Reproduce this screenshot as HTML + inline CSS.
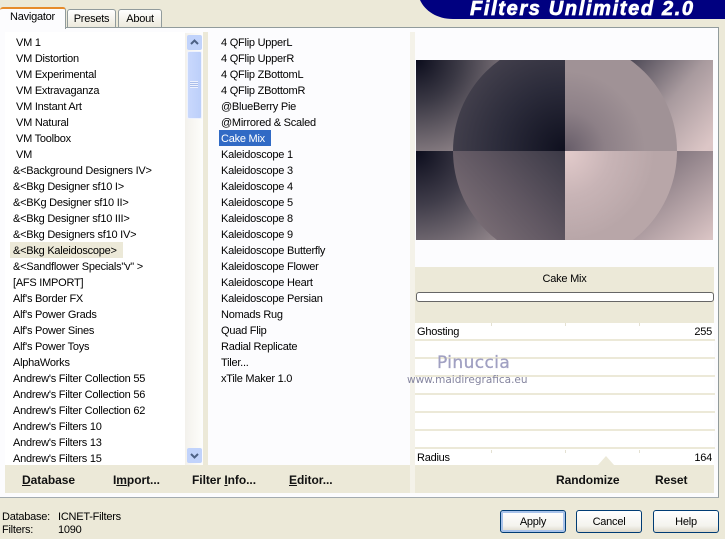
<!DOCTYPE html>
<html><head><meta charset="utf-8">
<style>
html,body{margin:0;padding:0}
body{width:725px;height:539px;overflow:hidden;background:#ece9d8;position:relative;font-family:"Liberation Sans",sans-serif;font-size:11px;letter-spacing:-.24px;color:#000}
.a{position:absolute}
.l{position:absolute;white-space:pre;line-height:18px;height:16px}
.b{position:absolute;font-weight:bold;font-size:12px;letter-spacing:-.05px;white-space:pre;line-height:16px;color:#111}
.btn{position:absolute;top:510px;width:66px;height:23px;box-sizing:border-box;border:1px solid #003c74;border-radius:3px;background:linear-gradient(#fff,#f4f3ee 70%,#dcd8ca);text-align:center;line-height:22px}
.sep{position:absolute;left:415px;width:300px;height:2px;background:#ece9d8}
.t{position:absolute;width:1px;height:3px;background:#e4e1d2}
</style></head><body>
<!-- pane -->
<div class="a" style="left:0;top:27px;width:719px;height:471px;box-sizing:border-box;background:#fcfcfe;border-top:1px solid #919b9c;border-right:1px solid #919b9c;border-bottom:1px solid #a3abb0"></div>
<!-- tabs -->
<div class="a" style="left:67px;top:9px;width:49px;height:18px;box-sizing:border-box;background:linear-gradient(#fff,#ece9dc);border:1px solid #919b9c;border-bottom:0;border-radius:3px 3px 0 0;text-align:center;line-height:19px">Presets</div>
<div class="a" style="left:118px;top:9px;width:44px;height:18px;box-sizing:border-box;background:linear-gradient(#fff,#ece9dc);border:1px solid #919b9c;border-bottom:0;border-radius:3px 3px 0 0;text-align:center;line-height:19px">About</div>
<div class="a" style="left:0;top:7px;width:66px;height:22px;box-sizing:border-box;background:#fcfcfe;border-top:2px solid #e68b2c;border-right:1px solid #919b9c;border-radius:3px 3px 0 0;text-align:center;line-height:17px;padding-left:0">Navigator</div>
<!-- left list -->
<div class="a" style="left:5px;top:32px;width:180px;height:433px;background:#fff"></div>
<div class="a" style="left:10px;top:242px;width:113px;height:16px;background:#ece9d8"></div>
<div class="l" style="left:16px;top:34px">VM 1</div>
<div class="l" style="left:16px;top:50px">VM Distortion</div>
<div class="l" style="left:16px;top:66px">VM Experimental</div>
<div class="l" style="left:16px;top:82px">VM Extravaganza</div>
<div class="l" style="left:16px;top:98px">VM Instant Art</div>
<div class="l" style="left:16px;top:114px">VM Natural</div>
<div class="l" style="left:16px;top:130px">VM Toolbox</div>
<div class="l" style="left:16px;top:146px">VM</div>
<div class="l" style="left:13px;top:162px">&amp;&lt;Background Designers IV&gt;</div>
<div class="l" style="left:13px;top:178px">&amp;&lt;Bkg Designer sf10 I&gt;</div>
<div class="l" style="left:13px;top:194px">&amp;&lt;BKg Designer sf10 II&gt;</div>
<div class="l" style="left:13px;top:210px">&amp;&lt;Bkg Designer sf10 III&gt;</div>
<div class="l" style="left:13px;top:226px">&amp;&lt;Bkg Designers sf10 IV&gt;</div>
<div class="l" style="left:13px;top:242px">&amp;&lt;Bkg Kaleidoscope&gt;</div>
<div class="l" style="left:13px;top:258px">&amp;&lt;Sandflower Specials"v" &gt;</div>
<div class="l" style="left:13px;top:274px">[AFS IMPORT]</div>
<div class="l" style="left:13px;top:290px">Alf's Border FX</div>
<div class="l" style="left:13px;top:306px">Alf's Power Grads</div>
<div class="l" style="left:13px;top:322px">Alf's Power Sines</div>
<div class="l" style="left:13px;top:338px">Alf's Power Toys</div>
<div class="l" style="left:13px;top:354px">AlphaWorks</div>
<div class="l" style="left:13px;top:370px">Andrew's Filter Collection 55</div>
<div class="l" style="left:13px;top:386px">Andrew's Filter Collection 56</div>
<div class="l" style="left:13px;top:402px">Andrew's Filter Collection 62</div>
<div class="l" style="left:13px;top:418px">Andrew's Filters 10</div>
<div class="l" style="left:13px;top:434px">Andrew's Filters 13</div>
<div class="l" style="left:13px;top:450px">Andrew's Filters 15</div>
<!-- scrollbar -->
<div class="a" style="left:185px;top:33px;width:17px;height:432px;background:linear-gradient(90deg,#f3f1ec,#fdfdfa)"></div>
<div class="a" style="left:187px;top:35px;width:15px;height:15px;background:#c1d3fb;border-radius:2px"></div>
<svg class="a" style="left:187px;top:35px" width="15" height="15"><path d="M4 9 L7.5 5.5 L11 9" fill="none" stroke="#4d6185" stroke-width="2"/></svg>
<div class="a" style="left:187px;top:51px;width:15px;height:68px;box-sizing:border-box;background:linear-gradient(90deg,#c9d8fc,#bccffa);border:1px solid #eef2fd;border-radius:2px"></div>
<div class="a" style="left:190px;top:81px;width:8px;height:7px;background:repeating-linear-gradient(#eef2fd 0 1px,#a9bdea 1px 2px)"></div>
<div class="a" style="left:187px;top:448px;width:15px;height:15px;background:#c1d3fb;border-radius:2px"></div>
<svg class="a" style="left:187px;top:448px" width="15" height="15"><path d="M4 6 L7.5 9.5 L11 6" fill="none" stroke="#4d6185" stroke-width="2"/></svg>
<!-- separators -->
<div class="a" style="left:203px;top:32px;width:5px;height:433px;background:#ece9d8"></div>
<div class="a" style="left:410px;top:32px;width:5px;height:461px;background:#f4f2e9"></div>
<!-- middle list -->
<div class="a" style="left:219px;top:130px;width:52px;height:16px;background:#316ac5"></div>
<div class="l" style="left:221px;top:34px">4 QFlip UpperL</div>
<div class="l" style="left:221px;top:50px">4 QFlip UpperR</div>
<div class="l" style="left:221px;top:66px">4 QFlip ZBottomL</div>
<div class="l" style="left:221px;top:82px">4 QFlip ZBottomR</div>
<div class="l" style="left:221px;top:98px">@BlueBerry Pie</div>
<div class="l" style="left:221px;top:114px">@Mirrored &amp; Scaled</div>
<div class="l" style="left:221px;top:130px;color:#fff">Cake Mix</div>
<div class="l" style="left:221px;top:146px">Kaleidoscope 1</div>
<div class="l" style="left:221px;top:162px">Kaleidoscope 3</div>
<div class="l" style="left:221px;top:178px">Kaleidoscope 4</div>
<div class="l" style="left:221px;top:194px">Kaleidoscope 5</div>
<div class="l" style="left:221px;top:210px">Kaleidoscope 8</div>
<div class="l" style="left:221px;top:226px">Kaleidoscope 9</div>
<div class="l" style="left:221px;top:242px">Kaleidoscope Butterfly</div>
<div class="l" style="left:221px;top:258px">Kaleidoscope Flower</div>
<div class="l" style="left:221px;top:274px">Kaleidoscope Heart</div>
<div class="l" style="left:221px;top:290px">Kaleidoscope Persian</div>
<div class="l" style="left:221px;top:306px">Nomads Rug</div>
<div class="l" style="left:221px;top:322px">Quad Flip</div>
<div class="l" style="left:221px;top:338px">Radial Replicate</div>
<div class="l" style="left:221px;top:354px">Tiler...</div>
<div class="l" style="left:221px;top:370px">xTile Maker 1.0</div>
<!-- preview -->
<svg class="a" style="left:416px;top:60px" width="297" height="180" viewBox="416 60 297 180">
<defs>
<radialGradient id="o1" gradientUnits="userSpaceOnUse" cx="416" cy="60" r="120"><stop offset="0" stop-color="#0b0c1c"/><stop offset=".35" stop-color="#3a3844"/><stop offset="1" stop-color="#a6989b"/></radialGradient>
<radialGradient id="i1" gradientUnits="userSpaceOnUse" cx="565" cy="151" r="130"><stop offset="0" stop-color="#0e0f1e"/><stop offset=".5" stop-color="#2b2b3a"/><stop offset="1" stop-color="#4a4652"/></radialGradient>
<linearGradient id="o2" gradientUnits="userSpaceOnUse" x1="625" y1="65" x2="713" y2="140"><stop offset="0" stop-color="#4c4855"/><stop offset=".5" stop-color="#a89a9e"/><stop offset="1" stop-color="#dcc6c6"/></linearGradient>
<radialGradient id="i2" gradientUnits="userSpaceOnUse" cx="565" cy="151" r="80"><stop offset="0" stop-color="#665c68"/><stop offset=".5" stop-color="#8d8087"/><stop offset="1" stop-color="#a09296"/></radialGradient>
<radialGradient id="o3" gradientUnits="userSpaceOnUse" cx="416" cy="151" r="135"><stop offset="0" stop-color="#0b0c1c"/><stop offset=".4" stop-color="#403d4a"/><stop offset="1" stop-color="#a6989b"/></radialGradient>
<linearGradient id="i3" gradientUnits="userSpaceOnUse" x1="565" y1="151" x2="470" y2="240"><stop offset="0" stop-color="#3b3946"/><stop offset=".5" stop-color="#5f5661"/><stop offset="1" stop-color="#7f7279"/></linearGradient>
<linearGradient id="o4" gradientUnits="userSpaceOnUse" x1="650" y1="160" x2="713" y2="240"><stop offset="0" stop-color="#7c7079"/><stop offset="1" stop-color="#dcc6c6"/></linearGradient>
<radialGradient id="i4" gradientUnits="userSpaceOnUse" cx="565" cy="151" r="90"><stop offset="0" stop-color="#e4cccc"/><stop offset=".5" stop-color="#c8b4b6"/><stop offset="1" stop-color="#b8a6a8"/></radialGradient>
<clipPath id="q1"><rect x="416" y="60" width="149" height="91"/></clipPath>
<clipPath id="q2"><rect x="565" y="60" width="148" height="91"/></clipPath>
<clipPath id="q3"><rect x="416" y="151" width="149" height="89"/></clipPath>
<clipPath id="q4"><rect x="565" y="151" width="148" height="89"/></clipPath>
</defs>
<rect x="416" y="60" width="149" height="91" fill="url(#o1)"/>
<rect x="565" y="60" width="148" height="91" fill="url(#o2)"/>
<rect x="416" y="151" width="149" height="89" fill="url(#o3)"/>
<rect x="565" y="151" width="148" height="89" fill="url(#o4)"/>
<circle cx="565" cy="151" r="112" fill="url(#i1)" clip-path="url(#q1)"/>
<circle cx="565" cy="151" r="112" fill="url(#i2)" clip-path="url(#q2)"/>
<circle cx="565" cy="151" r="112" fill="url(#i3)" clip-path="url(#q3)"/>
<circle cx="565" cy="151" r="112" fill="url(#i4)" clip-path="url(#q4)"/>
</svg>
<!-- name strip -->
<div class="a" style="left:415px;top:267px;width:299px;height:56px;background:#ece9d8"></div>
<div class="a" style="left:415px;top:271px;width:299px;text-align:center;line-height:16px">Cake Mix</div>
<div class="a" style="left:416px;top:292px;width:298px;height:10px;box-sizing:border-box;background:#fff;border:1px solid #666;border-radius:3px"></div>
<!-- sliders -->
<div class="a" style="left:415px;top:323px;width:299px;height:142px;background:#fff"></div>
<div class="sep" style="top:339px"></div><div class="sep" style="top:357px"></div><div class="sep" style="top:375px"></div><div class="sep" style="top:393px"></div><div class="sep" style="top:411px"></div><div class="sep" style="top:429px"></div><div class="sep" style="top:447px"></div>
<div class="t" style="left:491px;top:323px"></div><div class="t" style="left:565px;top:323px"></div><div class="t" style="left:639px;top:323px"></div>
<div class="t" style="left:491px;top:450px"></div><div class="t" style="left:565px;top:450px"></div><div class="t" style="left:639px;top:450px"></div>
<div class="l" style="left:417px;top:323px">Ghosting</div>
<div class="l" style="right:13px;top:323px">255</div>
<div class="l" style="left:417px;top:449px">Radius</div>
<div class="l" style="right:13px;top:449px">164</div>
<!-- watermark -->
<div class="a" style="left:437px;top:353px;font-family:'DejaVu Sans',sans-serif;font-size:17px;line-height:20px;color:#a0a0c2;letter-spacing:.4px;white-space:pre;-webkit-text-stroke:.3px #a0a0c2">Pinuccia</div>
<div class="a" style="left:407px;top:373px;font-family:'DejaVu Sans',sans-serif;font-size:10.5px;letter-spacing:0;line-height:14px;color:#85859f;white-space:pre">www.maidiregrafica.eu</div>
<!-- bottom strips -->
<div class="a" style="left:5px;top:465px;width:405px;height:28px;background:#ece9d8"></div>
<div class="a" style="left:415px;top:465px;width:299px;height:28px;background:#ece9d8"></div>
<svg class="a" style="left:598px;top:456px" width="16" height="9"><path d="M0 9 L8 0 L16 9Z" fill="#ece9d8"/></svg>
<div class="b" style="left:22px;top:472px"><u>D</u>atabase</div>
<div class="b" style="left:113px;top:472px">I<u>m</u>port...</div>
<div class="b" style="left:192px;top:472px">Filter <u>I</u>nfo...</div>
<div class="b" style="left:289px;top:472px"><u>E</u>ditor...</div>
<div class="b" style="left:556px;top:472px">Randomize</div>
<div class="b" style="left:655px;top:472px">Reset</div>
<!-- status -->
<div class="l" style="left:2px;top:508px">Database:</div>
<div class="l" style="left:58px;top:508px">ICNET-Filters</div>
<div class="l" style="left:2px;top:521px">Filters:</div>
<div class="l" style="left:58px;top:521px">1090</div>
<!-- buttons -->
<div class="btn" style="left:500px;box-shadow:inset 0 0 0 2px #a9c3ea">Apply</div>
<div class="btn" style="left:576px">Cancel</div>
<div class="btn" style="left:653px">Help</div>
<!-- ribbon -->
<svg class="a" style="left:415px;top:0" width="310" height="20"><path d="M5 0 C10 11 22 19 38 19 L310 19 L310 0 Z" fill="#000080"/></svg>
<div class="a" style="left:470px;top:-2px;font-size:20px;line-height:22px;font-weight:bold;font-style:italic;color:#fff;white-space:pre;letter-spacing:1.65px;-webkit-text-stroke:.7px #fff">Filters Unlimited 2.0</div>
</body></html>
